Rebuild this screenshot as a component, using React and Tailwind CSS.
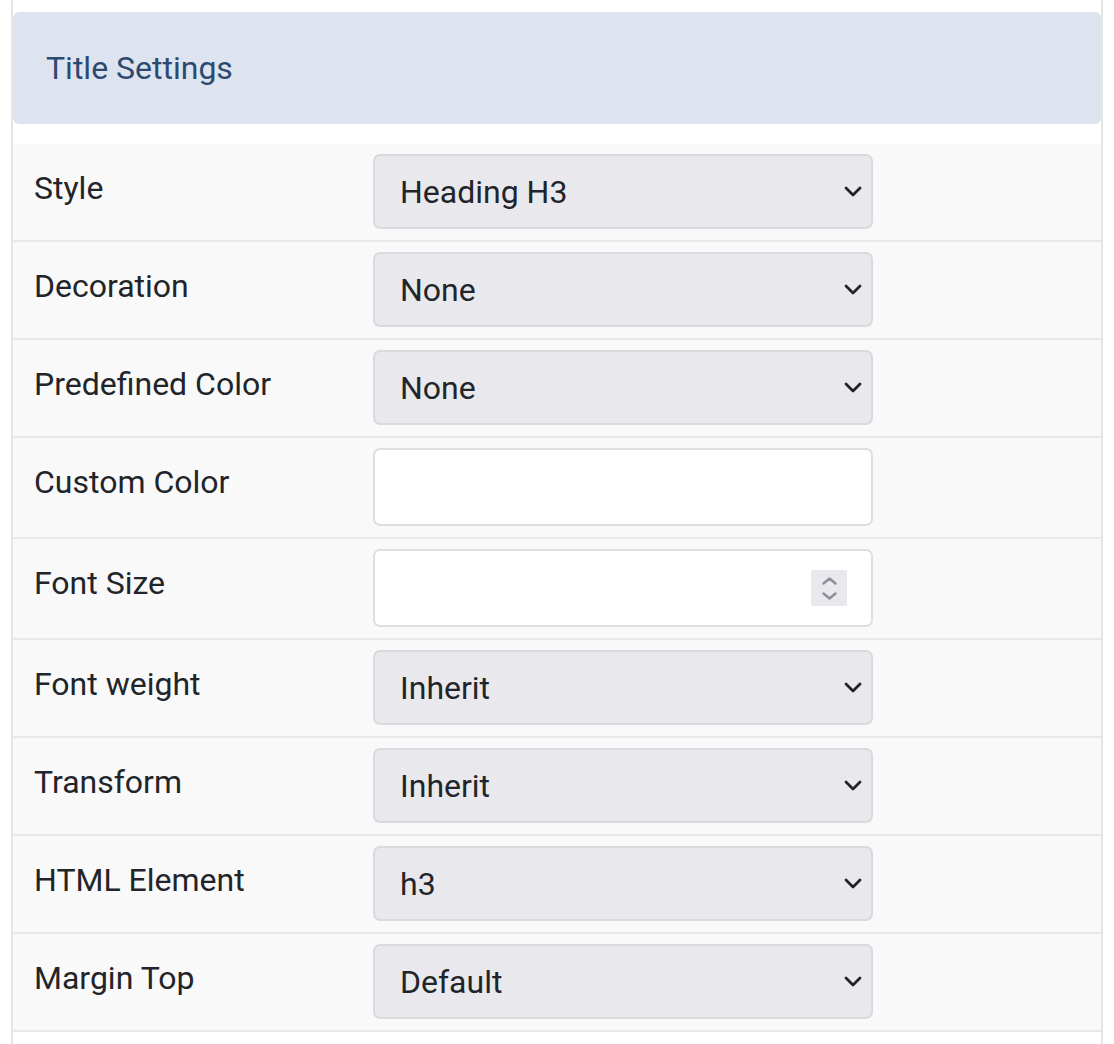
import React from "react";

const rows = [
  { label: "Style", type: "select", value: "Heading H3" },
  { label: "Decoration", type: "select", value: "None" },
  { label: "Predefined Color", type: "select", value: "None" },
  { label: "Custom Color", type: "text" },
  { label: "Font Size", type: "number" },
  { label: "Font weight", type: "select", value: "Inherit" },
  { label: "Transform", type: "select", value: "Inherit" },
  { label: "HTML Element", type: "select", value: "h3" },
  { label: "Margin Top", type: "select", value: "Default" },
];

function Chevron() {
  return (
    <svg width="18" height="11" viewBox="0 0 18 11" fill="none">
      <path d="M2 2 L9 9 L16 2" stroke="#222326" strokeWidth="2.8" strokeLinecap="round" strokeLinejoin="round" />
    </svg>
  );
}

function Spinner() {
  return (
    <div className="w-[36px] h-[36px] bg-[#e9e9ed] flex flex-col items-center justify-center gap-[7px]">
      <svg width="15" height="8" viewBox="0 0 15 8" fill="none">
        <path d="M1.5 6.5 L7.5 1.5 L13.5 6.5" stroke="#8d8d9b" strokeWidth="2.4" strokeLinecap="round" strokeLinejoin="round" />
      </svg>
      <svg width="15" height="8" viewBox="0 0 15 8" fill="none">
        <path d="M1.5 1.5 L7.5 6.5 L13.5 1.5" stroke="#8d8d9b" strokeWidth="2.4" strokeLinecap="round" strokeLinejoin="round" />
      </svg>
    </div>
  );
}

function Control({ row }) {
  if (row.type === "select") {
    return (
      <div className="w-[500px] h-[75px] rounded-[7px] border-2 border-[#dadade] bg-[#e9e9ed] flex items-center justify-between pl-[25px] pr-[9px]">
        <span className="text-[32px] text-[#212529]">{row.value}</span>
        <Chevron />
      </div>
    );
  }
  return (
    <div className="w-[500px] h-[78px] rounded-[7px] border-2 border-[#dedede] bg-white flex items-center justify-end pr-[24px]">
      {row.type === "number" ? <Spinner /> : null}
    </div>
  );
}

export default function App() {
  return (
    <div className="min-h-[1044px] bg-white" style={{ fontFamily: "Roboto, 'Noto Sans', sans-serif" }}>
      <div className="ml-[11px] w-[1092px] min-h-[1044px] border-x-2 border-[#e5e5e5] pt-[12px]">
        <div className="h-[112px] rounded-[6px] bg-[#dde4f0] flex items-center pl-[33px] pb-[1px]">
          <span className="text-[32px] text-[#2c4a70]">Title Settings</span>
        </div>
        <div className="mt-[20px]">
          {rows.map((row) => (
            <div key={row.label} className="flex bg-[#f9f9f9] border-b-2 border-[#e8e8e8] pt-[10px] pb-[11px]">
              <div className="w-[360px] pl-[21px] pt-[12px] text-[32px] leading-[45px] text-[#212529]">{row.label}</div>
              <Control row={row} />
            </div>
          ))}
        </div>
      </div>
    </div>
  );
}
